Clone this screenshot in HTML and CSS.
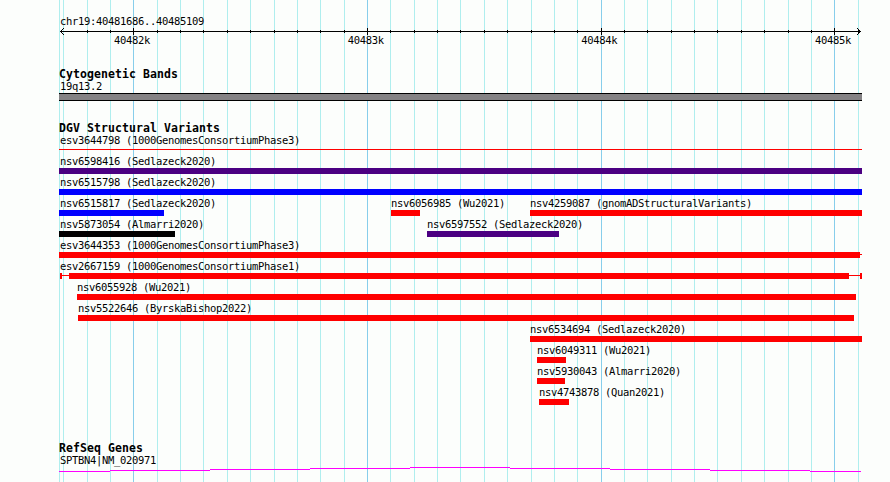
FILE: index.html
```
<!DOCTYPE html>
<html lang="en">
<head>
<meta charset="utf-8">
<title>chr19:40481686..40485109</title>
<link rel="stylesheet" href="styles.css">
</head>
<body>
<main class="browser">
  <svg class="gridlines" width="890" height="482" shape-rendering="crispEdges" aria-hidden="true">
    <path class="minor" d="M59.5 0V482M63.5 0V482M87.5 0V482M110.5 0V482M157.5 0V482M180.5 0V482M203.5 0V482M227.5 0V482M250.5 0V482M274.5 0V482M297.5 0V482M320.5 0V482M344.5 0V482M390.5 0V482M414.5 0V482M437.5 0V482M460.5 0V482M484.5 0V482M507.5 0V482M531.5 0V482M554.5 0V482M577.5 0V482M624.5 0V482M647.5 0V482M671.5 0V482M694.5 0V482M717.5 0V482M741.5 0V482M764.5 0V482M788.5 0V482M811.5 0V482M858.5 0V482"/>
    <path class="major" d="M133.5 0V482M367.5 0V482M601.5 0V482M834.5 0V482"/>
  </svg>

  <header class="ruler">
    <div class="label inset">chr19:40481686..40485109</div>
    <svg class="axis" width="803" height="7" viewBox="59 28 803 7" shape-rendering="crispEdges">
      <path d="M60 31.5H861M87.5 30V33M110.5 30V33M157.5 30V33M180.5 30V33M203.5 30V33M227.5 30V33M250.5 30V33M274.5 30V33M297.5 30V33M320.5 30V33M344.5 30V33M390.5 30V33M414.5 30V33M437.5 30V33M460.5 30V33M484.5 30V33M507.5 30V33M531.5 30V33M554.5 30V33M577.5 30V33M624.5 30V33M647.5 30V33M671.5 30V33M694.5 30V33M717.5 30V33M741.5 30V33M764.5 30V33M788.5 30V33M811.5 30V33M858.5 30V33M133.5 28V35M367.5 28V35M601.5 28V35M834.5 28V35"/>
      <path d="M61 30.5h1M62 29.5h1M63 28.5h1M61 32.5h1M62 33.5h1M63 34.5h1M859 30.5h1M858 29.5h1M857 28.5h1M859 32.5h1M858 33.5h1M857 34.5h1"/>
    </svg>
    <div class="ticks">
      <span class="label">40482k</span><span class="label">40483k</span><span class="label">40484k</span><span class="label">40485k</span>
    </div>
  </header>

  <section class="bands">
    <h2>Cytogenetic Bands</h2>
    <div class="label inset">19q13.2</div>
    <div class="band"></div>
  </section>

  <section class="variants">
    <h2>DGV Structural Variants</h2>
    <div class="lane"><div class="feature" style="--start:0;--len:803"><div class="label inset">esv3644798 (1000GenomesConsortiumPhase3)</div><div class="span"><i class="line" style="--len:803"></i></div></div></div>
    <div class="lane"><div class="feature" style="--start:0;--len:803"><div class="label inset">nsv6598416 (Sedlazeck2020)</div><div class="bar purple"></div></div></div>
    <div class="lane"><div class="feature" style="--start:0;--len:803"><div class="label inset">nsv6515798 (Sedlazeck2020)</div><div class="bar blue"></div></div></div>
    <div class="lane">
      <div class="feature" style="--start:0;--len:105"><div class="label inset">nsv6515817 (Sedlazeck2020)</div><div class="bar blue"></div></div>
      <div class="feature" style="--start:332;--len:29"><div class="label">nsv6056985 (Wu2021)</div><div class="bar"></div></div>
      <div class="feature" style="--start:471;--len:332"><div class="label">nsv4259087 (gnomADStructuralVariants)</div><div class="bar"></div></div>
    </div>
    <div class="lane">
      <div class="feature" style="--start:0;--len:116"><div class="label inset">nsv5873054 (Almarri2020)</div><div class="bar black"></div></div>
      <div class="feature" style="--start:368;--len:132"><div class="label">nsv6597552 (Sedlazeck2020)</div><div class="bar purple"></div></div>
    </div>
    <div class="lane"><div class="feature" style="--start:0;--len:803"><div class="label inset">esv3644353 (1000GenomesConsortiumPhase3)</div><div class="span"><i class="block" style="--len:801"></i><i class="line" style="--len:2"></i></div></div></div>
    <div class="lane"><div class="feature" style="--start:1;--len:802"><div class="label">esv2667159 (1000GenomesConsortiumPhase1)</div><div class="span"><i class="block" style="--len:2"></i><i class="line" style="--len:7"></i><i class="block" style="--len:780"></i><i class="line" style="--len:11"></i><i class="block" style="--len:2"></i></div></div></div>
    <div class="lane"><div class="feature" style="--start:18;--len:779"><div class="label">nsv6055928 (Wu2021)</div><div class="bar"></div></div></div>
    <div class="lane"><div class="feature" style="--start:19;--len:776"><div class="label">nsv5522646 (ByrskaBishop2022)</div><div class="bar"></div></div></div>
    <div class="lane"><div class="feature" style="--start:471;--len:332"><div class="label">nsv6534694 (Sedlazeck2020)</div><div class="bar"></div></div></div>
    <div class="lane"><div class="feature" style="--start:478;--len:29"><div class="label">nsv6049311 (Wu2021)</div><div class="bar"></div></div></div>
    <div class="lane"><div class="feature" style="--start:478;--len:28"><div class="label">nsv5930043 (Almarri2020)</div><div class="bar"></div></div></div>
    <div class="lane"><div class="feature" style="--start:480;--len:30"><div class="label">nsv4743878 (Quan2021)</div><div class="bar"></div></div></div>
  </section>

  <section class="genes">
    <h2>RefSeq Genes</h2>
    <div class="label inset">SPTBN4|NM_020971</div>
    <svg class="intron" width="803" height="6" viewBox="59 466 803 6" shape-rendering="crispEdges">
      <path d="M59 471.5H110M110 470.5H210M210 469.5H310M310 468.5H410M410 467.5H510M510 468.5H610M610 469.5H710M710 470.5H810M810 471.5H861"/>
    </svg>
  </section>
</main>
</body>
</html>
```
FILE: styles.css
```
body {
  margin: 0;
  background: #fcfefc;
  color: #000;
}

.browser {
  position: relative;
  box-sizing: border-box;
  width: 890px;
  height: 482px;
  padding: 15px 28px 0 59px;
  overflow: hidden;
  font: 10.5px/12px "DejaVu Sans Mono", monospace;
  letter-spacing: -0.321px;
}

.gridlines {
  position: absolute;
  inset: 0;
  z-index: -1;
}

.gridlines path,
.axis path,
.intron path {
  fill: none;
  stroke-width: 1;
}

.gridlines .minor { stroke: #afeeee; }
.gridlines .major { stroke: #87ceeb; }
.axis path { stroke: #000; }
.intron path { stroke: #f0f; }

svg { display: block; }

h2 {
  margin: 0;
  font-size: 11.5px;
  line-height: 12px;
  font-weight: bold;
  letter-spacing: 0.077px;
}

.label {
  height: 12px;
  white-space: nowrap;
}

.inset { padding-left: 1px; }

.axis { margin-top: 1px; }

.ticks {
  display: flex;
  justify-content: space-between;
  height: 12px;
  margin-top: -1px;
  padding: 0 11px 0 55px;
}

.bands { margin-top: 22px; }

.band {
  box-sizing: border-box;
  height: 8px;
  margin-top: 1px;
  border: solid #000;
  border-width: 1px 0;
  background: #848284;
}

.variants { margin-top: 21px; }

.lane {
  display: grid;
  grid-template-columns: 803px;
  height: 21px;
}

.feature {
  grid-area: 1 / 1;
  width: calc(var(--len) * 1px);
  margin-left: calc(var(--start) * 1px);
}

.bar,
.span {
  height: 6px;
  margin-top: 1px;
}

.bar { background: #f00; }
.bar.purple { background: #4b0082; }
.bar.blue { background: #00f; }
.bar.black { background: #000; }

.span { display: flex; }

.block,
.line {
  flex: none;
  width: calc(var(--len) * 1px);
  height: 6px;
  background: #f00;
}

.line {
  height: 1px;
  margin-top: 2px;
}

.genes { margin-top: 35px; }
```
